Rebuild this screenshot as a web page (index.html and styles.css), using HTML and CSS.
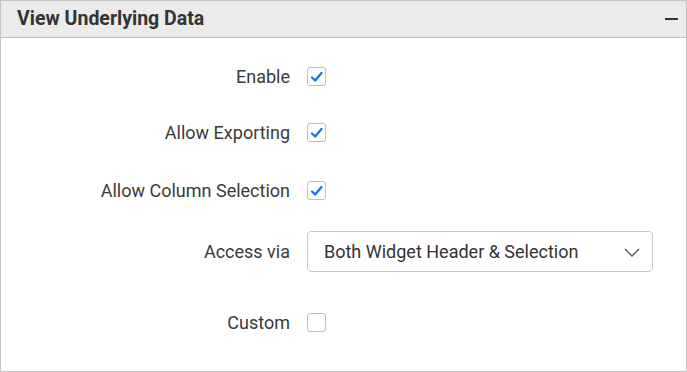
FILE: index.html
```html
<!DOCTYPE html>
<html>
<head>
<meta charset="utf-8">
<link rel="stylesheet" href="styles.css">
</head>
<body>
<div class="panel">
  <div class="header">
    <span class="title">View Underlying Data</span>
    <span class="collapse"></span>
  </div>
  <div class="content">
    <div class="row r1">
      <label class="label">Enable</label>
      <span class="cb checked"><svg viewBox="0 0 19 19" width="19" height="19"><path d="M5 10.5 L8.2 13.5 L14.5 6" fill="none" stroke="#0d6efd" stroke-width="2.2" stroke-linecap="round" stroke-linejoin="round"/></svg></span>
    </div>
    <div class="row r2">
      <label class="label">Allow Exporting</label>
      <span class="cb checked"><svg viewBox="0 0 19 19" width="19" height="19"><path d="M5 10.5 L8.2 13.5 L14.5 6" fill="none" stroke="#0d6efd" stroke-width="2.2" stroke-linecap="round" stroke-linejoin="round"/></svg></span>
    </div>
    <div class="row r3">
      <label class="label">Allow Column Selection</label>
      <span class="cb checked"><svg viewBox="0 0 19 19" width="19" height="19"><path d="M5 10.5 L8.2 13.5 L14.5 6" fill="none" stroke="#0d6efd" stroke-width="2.2" stroke-linecap="round" stroke-linejoin="round"/></svg></span>
    </div>
    <div class="row r4">
      <label class="label">Access via</label>
      <div class="select">
        <span class="select-text">Both Widget Header &amp; Selection</span>
        <svg class="chev" viewBox="0 0 16 9" width="16" height="9"><path d="M1 1 L8 8 L15 1" fill="none" stroke="#555" stroke-width="1.4"/></svg>
      </div>
    </div>
    <div class="row r5">
      <label class="label">Custom</label>
      <span class="cb"></span>
    </div>
  </div>
</div>
</body>
</html>
```
FILE: styles.css
```css
* { box-sizing: border-box; }
html, body { margin: 0; padding: 0; background: #fff; }
body { font-family: Roboto, "Noto Sans", sans-serif; color: #333; }
.panel {
  width: 687px;
  height: 372px;
  border: 1px solid #c4c4c4;
  display: flex;
  flex-direction: column;
}
.header {
  height: 37px;
  background: #ebebeb;
  border-bottom: 1px solid #c4c4c4;
  display: flex;
  align-items: center;
  justify-content: space-between;
  padding: 0 8px 0 16px;
  flex: none;
}
.title {
  font-size: 19.5px;
  font-weight: 700;
  color: #333;
  line-height: 22px;
}
.collapse {
  width: 13px;
  height: 2px;
  background: #333;
  margin-bottom: 1px;
}
.content { display: flex; flex-direction: column; }
.row {
  display: flex;
  align-items: center;
  gap: 17px;
}
.label {
  width: 289px;
  text-align: right;
  font-size: 18px;
  line-height: 21px;
  color: #3a3a3a;
}
.r1 { margin-top: 28px; }
.r2 { margin-top: 35px; }
.r3 { margin-top: 37px; }
.r4 { margin-top: 30px; }
.r5 { margin-top: 40px; }
.cb {
  width: 19px;
  height: 19px;
  border: 1px solid #bdbdbd;
  border-radius: 3px;
  background: #fff;
  position: relative;
  flex: none;
}
.cb svg { position: absolute; left: -1px; top: -1px; }
.select {
  width: 346px;
  height: 41px;
  border: 1px solid #c8c8c8;
  border-radius: 4px;
  display: flex;
  align-items: center;
  justify-content: space-between;
  padding: 0 12px 0 16px;
}
.select-text { font-size: 18px; color: #333; line-height: 21px; }
.chev { display: block; margin-top: 1px; }
```
